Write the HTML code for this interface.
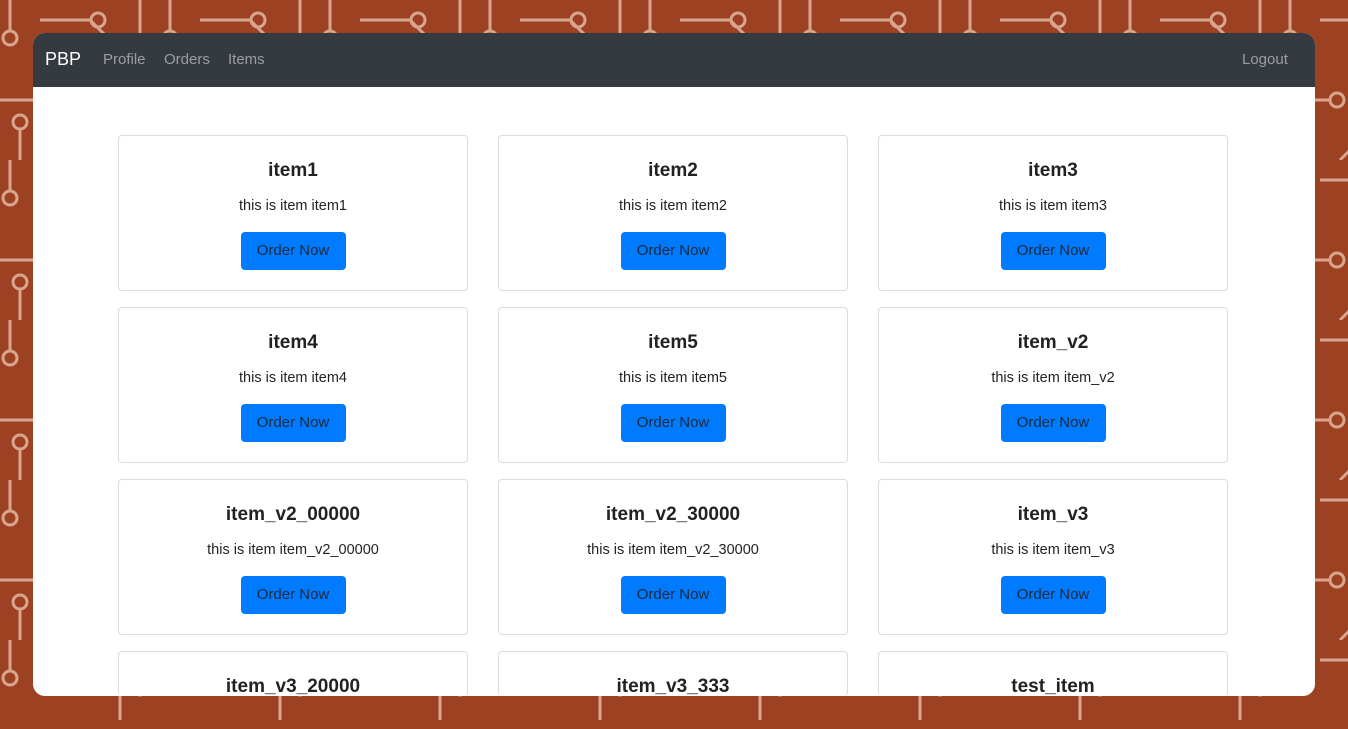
<!DOCTYPE html>
<html><head><meta charset="utf-8"><style>
*{box-sizing:border-box;margin:0;padding:0}
html,body{width:1348px;height:729px;overflow:hidden}
body{background:#9c4222;font-family:"Liberation Sans",sans-serif;position:relative}
#bg{position:absolute;left:0;top:0}
.win{position:absolute;left:33px;top:33px;width:1282px;height:663px;background:#fff;border-radius:12px;overflow:hidden}
.nav{height:54px;background:#343a40;position:relative}
.nav span{position:absolute;top:18px;font-size:15px;color:#9a9da1}
.brand{left:12px;color:#fff!important;font-size:18px!important;top:16px!important}
.card{position:absolute;width:350px;height:156px;border:1px solid #dcdcdc;border-radius:4px;text-align:center}
.card h5{font-size:19px;font-weight:bold;color:#222;margin-top:24px;height:24px}
.card p{font-size:14.5px;color:#222;margin-top:14px;height:18px}
.card .b{display:inline-block;margin-top:16px;width:105px;height:38px;line-height:38px;background:#007bff;border-radius:4px;font-size:15px;color:#1d2a3a}
</style></head><body>
<svg id="bg" width="1348" height="729"><defs><pattern id="p" width="160" height="160" patternUnits="userSpaceOnUse">
<g stroke="#d9a58f" stroke-width="3" fill="none">
<path d="M10 0V30M40 20H90L120 50V80M0 100H50M60 160L110 110H160M140 0V40M20 130V160"/>
<circle cx="10" cy="38" r="7"/><circle cx="98" cy="20" r="7"/><circle cx="57" cy="100" r="7"/><circle cx="140" cy="48" r="7"/><circle cx="20" cy="122" r="7"/>
</g></pattern></defs><rect width="1348" height="729" fill="url(#p)"/></svg>
<div class="win">
<div class="nav"><span class="brand">PBP</span><span style="left:70px">Profile</span><span style="left:131px">Orders</span><span style="left:195px">Items</span><span style="left:1209px">Logout</span></div>
<div class="card" style="left:85px;top:102px"><h5>item1</h5><p>this is item item1</p><span class="b">Order Now</span></div>
<div class="card" style="left:465px;top:102px"><h5>item2</h5><p>this is item item2</p><span class="b">Order Now</span></div>
<div class="card" style="left:845px;top:102px"><h5>item3</h5><p>this is item item3</p><span class="b">Order Now</span></div>
<div class="card" style="left:85px;top:274px"><h5>item4</h5><p>this is item item4</p><span class="b">Order Now</span></div>
<div class="card" style="left:465px;top:274px"><h5>item5</h5><p>this is item item5</p><span class="b">Order Now</span></div>
<div class="card" style="left:845px;top:274px"><h5>item_v2</h5><p>this is item item_v2</p><span class="b">Order Now</span></div>
<div class="card" style="left:85px;top:446px"><h5>item_v2_00000</h5><p>this is item item_v2_00000</p><span class="b">Order Now</span></div>
<div class="card" style="left:465px;top:446px"><h5>item_v2_30000</h5><p>this is item item_v2_30000</p><span class="b">Order Now</span></div>
<div class="card" style="left:845px;top:446px"><h5>item_v3</h5><p>this is item item_v3</p><span class="b">Order Now</span></div>
<div class="card" style="left:85px;top:618px;height:45px;border-bottom:none"><h5>item_v3_20000</h5></div>
<div class="card" style="left:465px;top:618px;height:45px;border-bottom:none"><h5>item_v3_333</h5></div>
<div class="card" style="left:845px;top:618px;height:45px;border-bottom:none"><h5>test_item</h5></div>
</div>
</body></html>
